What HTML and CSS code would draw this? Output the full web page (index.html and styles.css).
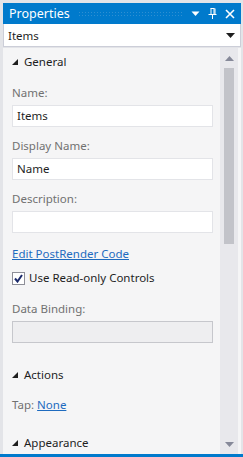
FILE: index.html
```html
<!DOCTYPE html>
<html lang="en">
<head>
    <meta charset="UTF-8">
    <title>Properties</title>
    <link rel="stylesheet" href="styles.css">
</head>
<body>
    <div class="window">
        <div class="titlebar">
            <span class="title">Properties</span>
            <div class="grip"></div>
            <div class="title-icons">
                <svg width="9" height="6" viewBox="0 0 9 6"><polygon points="0.5,0.5 8.5,0.5 4.5,5" fill="#fff"/></svg>
                <svg width="9" height="11" viewBox="0 0 9 11"><path d="M2.5 0.5h4M3 0.5v6M6 0.5v6M7 0.5v6M0.5 6.5h8M4.5 6.5v4.5" stroke="#fff" stroke-width="1" fill="none"/></svg>
                <svg width="10" height="10" viewBox="0 0 10 10"><path d="M1 1l8 8M9 1l-8 8" stroke="#fff" stroke-width="1.6"/></svg>
            </div>
        </div>
        <div class="combo">
            <span>Items</span>
            <svg width="9" height="5" viewBox="0 0 9 5"><polygon points="0,0 9,0 4.5,5" fill="#1e1e1e"/></svg>
        </div>
        <div class="panel">
            <div class="content">
                <div class="section">
                    <svg class="tri" width="6" height="6" viewBox="0 0 6 6"><polygon points="6,0 6,6 0,6" fill="#1e1e1e"/></svg>
                    General
                </div>
                <div class="field first">
                    <div class="label">Name:</div>
                    <div class="input">Items</div>
                </div>
                <div class="field">
                    <div class="label">Display Name:</div>
                    <div class="input">Name</div>
                </div>
                <div class="field">
                    <div class="label">Description:</div>
                    <div class="input"></div>
                </div>
                <a class="link edit-link" href="#">Edit PostRender Code</a>
                <div class="check-row">
                    <span class="checkbox">
                        <svg width="9" height="9" viewBox="0 0 9 9"><path d="M1 4.5l2.5 3L8 1" stroke="#1b2a6b" stroke-width="2" fill="none"/></svg>
                    </span>
                    Use Read-only Controls
                </div>
                <div class="field binding">
                    <div class="label">Data Binding:</div>
                    <div class="input disabled"></div>
                </div>
                <div class="section actions">
                    <svg class="tri" width="6" height="6" viewBox="0 0 6 6"><polygon points="6,0 6,6 0,6" fill="#1e1e1e"/></svg>
                    Actions
                </div>
                <div class="tap-row">
                    <span class="label">Tap:</span> <a class="link" href="#">None</a>
                </div>
                <div class="section appearance">
                    <svg class="tri" width="6" height="6" viewBox="0 0 6 6"><polygon points="6,0 6,6 0,6" fill="#1e1e1e"/></svg>
                    Appearance
                </div>
            </div>
            <div class="scrollbar">
                <svg class="arrow" width="9" height="5" viewBox="0 0 9 5"><polygon points="4.5,0 9,5 0,5" fill="#868999"/></svg>
                <div class="thumb"></div>
                <div class="track-space"></div>
                <svg class="arrow" width="9" height="5" viewBox="0 0 9 5"><polygon points="0,0 9,0 4.5,5" fill="#868999"/></svg>
            </div>
        </div>
        <div class="bottom-line"></div>
    </div>
</body>
</html>
```
FILE: styles.css
```css
body {
    margin: 0;
    background-color: #e3e4e8;
    font-family: "Noto Sans", "Open Sans", sans-serif;
    font-size: 11.5px;
    color: #1e1e1e;
}
.window {
    height: 457px;
    display: flex;
    flex-direction: column;
    padding-top: 3px;
    box-sizing: border-box;
    overflow: hidden;
}
.titlebar {
    height: 21px;
    margin: 0 2px 0 3px;
    background-color: #007acc;
    display: flex;
    align-items: center;
    padding: 0 6px;
    color: #fff;
}
.title {
    font-size: 12.5px;
}
.grip {
    flex: 1;
    height: 5px;
    margin: 0 8px 0 8px;
    background-image: radial-gradient(circle, #2e8fd2 0.7px, transparent 1px);
    background-size: 3px 3px;
}
.title-icons {
    display: flex;
    align-items: center;
    gap: 8px;
}
.combo {
    height: 23px;
    margin: 0 2px 0 3px;
    background-color: #fff;
    border: 1px solid #ccced8;
    border-top: none;
    box-sizing: border-box;
    display: flex;
    align-items: center;
    justify-content: space-between;
    padding: 0 5px 0 4px;
}
.panel {
    flex: 1;
    display: flex;
    margin: 1px 2px 0 3px;
    background-color: #f5f5f6;
    min-height: 0;
}
.content {
    flex: 1;
    padding: 6px 0 0 9px;
    line-height: 16px;
}
.section {
    display: flex;
    align-items: center;
}
.tri {
    margin: 0 6px 0 0;
}
.label {
    color: #717171;
}
.field {
    margin-top: 11px;
}
.field.first {
    margin-top: 15px;
}
.input {
    width: 201px;
    height: 22px;
    margin-top: 4px;
    background-color: #fff;
    border: 1px solid #e3e4e8;
    box-sizing: border-box;
    padding: 2px 4px;
    line-height: 16px;
}
.input.disabled {
    background-color: #eeeef0;
    border-color: #c6c7cc;
}
.link {
    color: #1e6bbf;
    text-decoration: underline;
}
.edit-link {
    display: block;
    margin-top: 13px;
}
.check-row {
    display: flex;
    align-items: center;
    margin-top: 8px;
}
.checkbox {
    width: 13px;
    height: 13px;
    border: 1px solid #8e8f98;
    background-color: #fff;
    box-sizing: border-box;
    display: flex;
    align-items: center;
    justify-content: center;
    margin-right: 4px;
}
.field.binding {
    margin-top: 15px;
}
.section.actions {
    margin-top: 24px;
}
.tap-row {
    margin-top: 14px;
}
.section.appearance {
    margin-top: 22px;
}
.scrollbar {
    width: 18px;
    margin-right: 3px;
    background-color: #e8e8ec;
    display: flex;
    flex-direction: column;
    align-items: center;
}
.arrow {
    margin: 8px 0 7px;
}
.thumb {
    width: 10px;
    height: 176px;
    background-color: #c2c3c9;
}
.track-space {
    flex: 1;
}
.bottom-line {
    height: 3px;
    background-color: #007acc;
}
```
